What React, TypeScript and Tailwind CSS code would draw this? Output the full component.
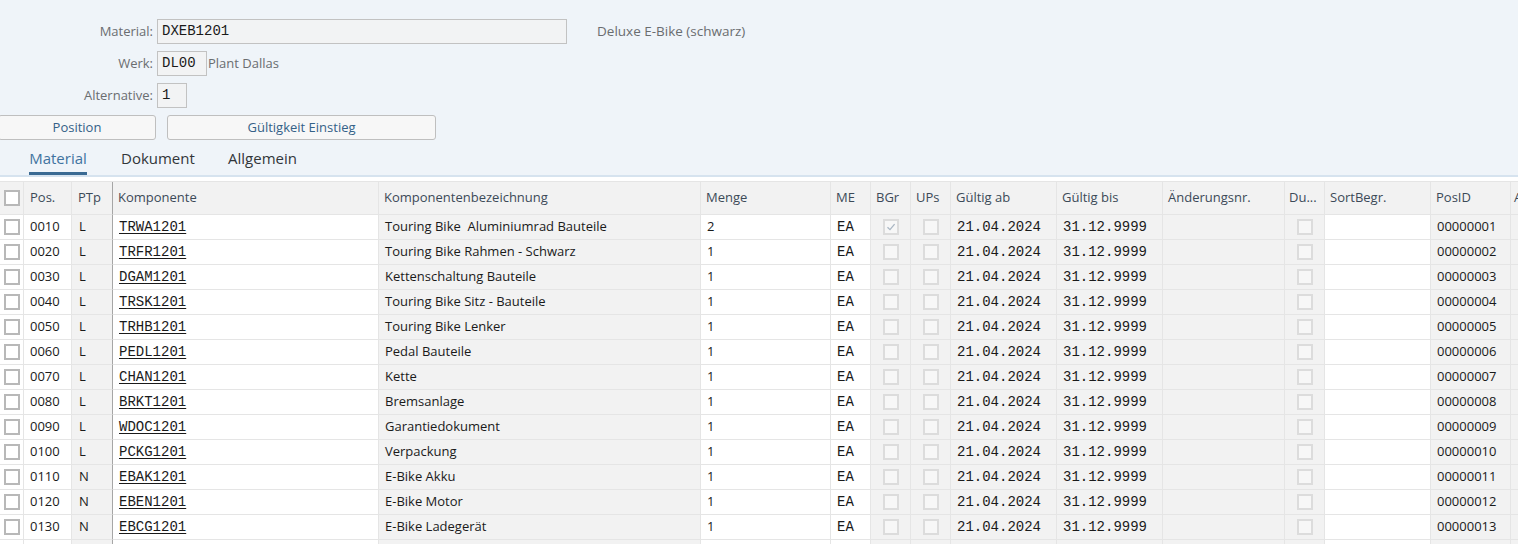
import React from "react";

const SANS = "font-['Open_Sans','Noto_Sans',sans-serif]";
const MONO = "font-['Liberation_Mono','DejaVu_Sans_Mono',monospace]";

type Row = { pos: string; ptp: string; comp: string; desc: string; qty: string; bgr?: boolean; id: string };

const rows: Row[] = [
  { pos: "0010", ptp: "L", comp: "TRWA1201", desc: "Touring Bike  Aluminiumrad Bauteile", qty: "2", bgr: true, id: "00000001" },
  { pos: "0020", ptp: "L", comp: "TRFR1201", desc: "Touring Bike Rahmen - Schwarz", qty: "1", id: "00000002" },
  { pos: "0030", ptp: "L", comp: "DGAM1201", desc: "Kettenschaltung Bauteile", qty: "1", id: "00000003" },
  { pos: "0040", ptp: "L", comp: "TRSK1201", desc: "Touring Bike Sitz - Bauteile", qty: "1", id: "00000004" },
  { pos: "0050", ptp: "L", comp: "TRHB1201", desc: "Touring Bike Lenker", qty: "1", id: "00000005" },
  { pos: "0060", ptp: "L", comp: "PEDL1201", desc: "Pedal Bauteile", qty: "1", id: "00000006" },
  { pos: "0070", ptp: "L", comp: "CHAN1201", desc: "Kette", qty: "1", id: "00000007" },
  { pos: "0080", ptp: "L", comp: "BRKT1201", desc: "Bremsanlage", qty: "1", id: "00000008" },
  { pos: "0090", ptp: "L", comp: "WDOC1201", desc: "Garantiedokument", qty: "1", id: "00000009" },
  { pos: "0100", ptp: "L", comp: "PCKG1201", desc: "Verpackung", qty: "1", id: "00000010" },
  { pos: "0110", ptp: "N", comp: "EBAK1201", desc: "E-Bike Akku", qty: "1", id: "00000011" },
  { pos: "0120", ptp: "N", comp: "EBEN1201", desc: "E-Bike Motor", qty: "1", id: "00000012" },
  { pos: "0130", ptp: "N", comp: "EBCG1201", desc: "E-Bike Ladegerät", qty: "1", id: "00000013" },
];

const GRID =
  "grid grid-cols-[24px_48px_41px_266px_322px_130px_40px_40px_40px_106px_106px_122px_40px_106px_80px_120px]";

function SelBox() {
  return <div className="w-[16px] h-[16px] border-2 border-[#b8b8b8] bg-white" />;
}

function DisBox({ checked }: { checked?: boolean }) {
  return (
    <div className="w-[16px] h-[16px] border-2 border-[#dcdcdc] bg-[#f7f7f7] flex items-center justify-center">
      {checked && (
        <svg width="10" height="10" viewBox="0 0 10 10">
          <path d="M1.5 5.2 L4 7.6 L8.6 2.2" fill="none" stroke="#a9b6c3" strokeWidth="1.3" />
        </svg>
      )}
    </div>
  );
}

const cellBase = "h-[25px] border-r border-b border-[#e5e5e5] flex items-center overflow-hidden whitespace-pre";
const W = "bg-white";
const G = "bg-[#f2f2f2]";

export default function App() {
  return (
    <div className={`w-[1518px] h-[544px] overflow-hidden bg-white ${SANS}`}>
      {/* Header form */}
      <div className="bg-[#eff4f9] h-[175px] flex flex-col">
        <div className="pt-[19px] flex flex-col gap-[7px]">
          <div className="flex items-center h-[25px]">
            <div className="w-[153px] text-right text-[13px] text-[#6a6d70]">Material:</div>
            <div className={`ml-[4px] w-[410px] h-[25px] border border-[#c2c2c2] bg-[#f2f3f4] flex items-center pl-[4px] text-[14px] text-[#1a1a1a] ${MONO}`}>
              DXEB1201
            </div>
            <div className="ml-[30px] text-[13.5px] text-[#6a6d70]">Deluxe E-Bike (schwarz)</div>
          </div>
          <div className="flex items-center h-[25px]">
            <div className="w-[153px] text-right text-[13px] text-[#6a6d70]">Werk:</div>
            <div className={`ml-[4px] w-[50px] h-[25px] border border-[#c2c2c2] bg-[#f2f3f4] flex items-center pl-[4px] text-[14px] text-[#1a1a1a] ${MONO}`}>
              DL00
            </div>
            <div className="ml-[1px] text-[13px] text-[#6a6d70]">Plant Dallas</div>
          </div>
          <div className="flex items-center h-[25px]">
            <div className="w-[153px] text-right text-[13px] text-[#6a6d70]">Alternative:</div>
            <div className={`ml-[4px] w-[30px] h-[25px] border border-[#c2c2c2] bg-[#f2f3f4] flex items-center pl-[4px] text-[14px] text-[#1a1a1a] ${MONO}`}>
              1
            </div>
          </div>
          <div className="flex items-center h-[25px]">
            <div className="ml-[-2px] w-[158px] h-[25px] border border-[#bfbfbf] rounded-[3px] bg-[#f7f7f7] flex items-center justify-center text-[13px] text-[#346187]">
              Position
            </div>
            <div className="ml-[11px] w-[269px] h-[25px] border border-[#bfbfbf] rounded-[3px] bg-[#f7f7f7] flex items-center justify-center text-[13px] text-[#346187]">
              Gültigkeit Einstieg
            </div>
          </div>
        </div>
        <div className="flex items-stretch h-[35px] pl-[29px] text-[15px]">
          <div className="w-[58px] shrink-0 flex flex-col justify-between">
            <div className="pt-[7px] text-[#3f73a0] text-center">Material</div>
            <div className="h-[3px] bg-[#3a6a93]" />
          </div>
          <div className="w-[141px] shrink-0 pl-[34px] pt-[7px] text-[#32363a]">Dokument</div>
          <div className="pt-[7px] text-[#32363a]">Allgemein</div>
        </div>
      </div>
      <div className="h-[2px] bg-[#d6e3ef]" />
      <div className="h-[4px]" />

      {/* Table */}
      <div className="border-t border-[#e5e5e5]">
        <div className={`${GRID} text-[13px] text-[#3c4a58]`}>
          <div className={`${cellBase} h-[33px] ${G} justify-center`}><SelBox /></div>
          <div className={`${cellBase} h-[33px] ${G} pl-[6px]`}>Pos.</div>
          <div className={`${cellBase} h-[33px] ${G} pl-[6px] border-r-[#a6a6a6]`}>PTp</div>
          <div className={`${cellBase} h-[33px] ${G} pl-[5px]`}>Komponente</div>
          <div className={`${cellBase} h-[33px] ${G} pl-[5px]`}>Komponentenbezeichnung</div>
          <div className={`${cellBase} h-[33px] ${G} pl-[5px]`}>Menge</div>
          <div className={`${cellBase} h-[33px] ${G} pl-[5px]`}>ME</div>
          <div className={`${cellBase} h-[33px] ${G} pl-[5px]`}>BGr</div>
          <div className={`${cellBase} h-[33px] ${G} pl-[5px]`}>UPs</div>
          <div className={`${cellBase} h-[33px] ${G} pl-[5px]`}>Gültig ab</div>
          <div className={`${cellBase} h-[33px] ${G} pl-[5px]`}>Gültig bis</div>
          <div className={`${cellBase} h-[33px] ${G} pl-[5px]`}>Änderungsnr.</div>
          <div className={`${cellBase} h-[33px] ${G} pl-[4px]`}>Du...</div>
          <div className={`${cellBase} h-[33px] ${G} pl-[5px]`}>SortBegr.</div>
          <div className={`${cellBase} h-[33px] ${G} pl-[5px]`}>PosID</div>
          <div className={`${cellBase} h-[33px] ${G} pl-[3px]`}>Alternativ</div>
        </div>
        {[...rows, null].map((r, i) => (
          <div key={i} className={`${GRID} text-[13px] text-[#1a1a1a]`}>
            <div className={`${cellBase} ${W} justify-center`}>{r && <SelBox />}</div>
            <div className={`${cellBase} ${W} pl-[6px]`}>{r?.pos}</div>
            <div className={`${cellBase} ${G} pl-[7px] border-r-[#a6a6a6]`}>{r?.ptp}</div>
            <div className={`${cellBase} ${W} pl-[6px]`}>
              {r && <span className={`${MONO} text-[14px] underline underline-offset-[2px]`}>{r.comp}</span>}
            </div>
            <div className={`${cellBase} ${G} pl-[6px]`}>{r?.desc}</div>
            <div className={`${cellBase} ${W} pl-[6px]`}>{r?.qty}</div>
            <div className={`${cellBase} ${W} pl-[6px] ${MONO} text-[14px]`}>{r && "EA"}</div>
            <div className={`${cellBase} ${G} justify-center`}>{r && <DisBox checked={r.bgr} />}</div>
            <div className={`${cellBase} ${G} justify-center`}>{r && <DisBox />}</div>
            <div className={`${cellBase} ${G} pl-[6px] ${MONO} text-[14px]`}>{r && "21.04.2024"}</div>
            <div className={`${cellBase} ${G} pl-[6px] ${MONO} text-[14px]`}>{r && "31.12.9999"}</div>
            <div className={`${cellBase} ${G}`} />
            <div className={`${cellBase} ${G} justify-center`}>{r && <DisBox />}</div>
            <div className={`${cellBase} ${W}`} />
            <div className={`${cellBase} ${G} pl-[6px]`}>{r?.id}</div>
            <div className={`${cellBase} ${G}`} />
          </div>
        ))}
      </div>
    </div>
  );
}
